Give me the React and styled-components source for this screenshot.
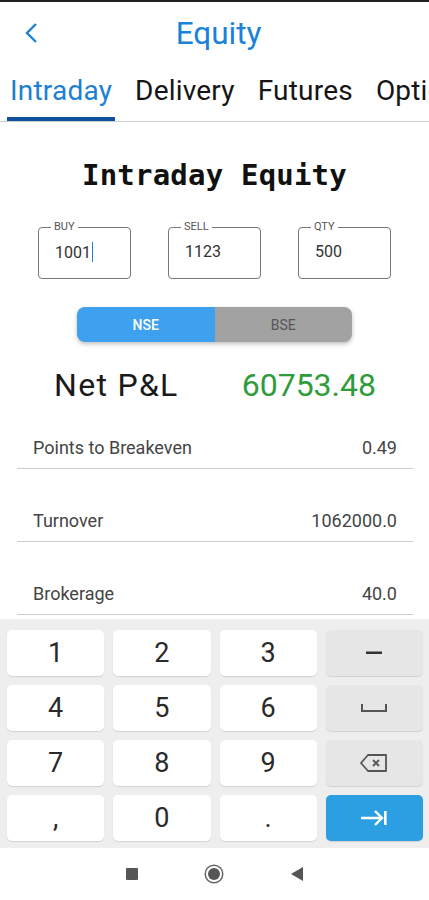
import styled, { createGlobalStyle } from 'styled-components';

const Global = createGlobalStyle`
  html, body { margin: 0; padding: 0; background: #fff; }
  body { font-family: Roboto, "Noto Sans", sans-serif; }
`;

const Screen = styled.div`
  width: 429px;
  height: 900px;
  display: flex;
  flex-direction: column;
  overflow: hidden;
  border-top: 2px solid #222;
  box-sizing: border-box;
`;

const Header = styled.div`
  height: 62px;
  display: flex;
  align-items: center;
  justify-content: center;
  position: relative;
`;

const Back = styled.div`
  position: absolute;
  left: 22px;
  top: 18px;
  width: 20px;
  height: 26px;
`;

const Title = styled.div`
  font-size: 31.5px;
  color: #1a82d8;
  margin-left: 8px;
`;

const Tabs = styled.div`
  display: flex;
  white-space: nowrap;
  overflow: hidden;
  border-bottom: 1.5px solid #cfcfcf;
  padding-left: 7px;
  gap: 17px;
  height: 58px;
  box-sizing: border-box;
  align-items: flex-end;
`;

const Tab = styled.div`
  font-size: 28px;
  line-height: 32px;
  padding: 0 3px 10px;
  color: ${p => (p.active ? '#1e7fd0' : '#151515')};
  border-bottom: 4px solid ${p => (p.active ? '#0e4f9e' : 'transparent')};
  letter-spacing: 0.2px;
`;

const Heading = styled.div`
  font-family: "DejaVu Sans Mono", monospace;
  font-weight: bold;
  font-size: 29px;
  color: #111;
  text-align: center;
  margin-top: 36px;
  letter-spacing: 0.2px;
`;

const Inputs = styled.div`
  display: flex;
  justify-content: space-between;
  padding: 0 38px;
  margin-top: 35px;
`;

const Field = styled.div`
  position: relative;
  width: 93px;
  height: 52px;
  border: 1.3px solid #777;
  border-radius: 4px;
  box-sizing: border-box;
`;

const Label = styled.span`
  position: absolute;
  top: -7px;
  left: 12px;
  padding: 0 3px;
  background: #fff;
  font-size: 11px;
  color: #555;
  line-height: 12px;
`;

const Value = styled.div`
  position: absolute;
  left: 16px;
  top: 14px;
  font-size: 16px;
  color: #333;
  display: flex;
  align-items: center;
`;

const Caret = styled.span`
  width: 1.5px;
  height: 20px;
  background: #1a82d8;
  margin-left: 1px;
`;

const Toggle = styled.div`
  margin: 28px auto 0;
  width: 275px;
  height: 35px;
  border-radius: 8px;
  background: #a2a2a2;
  display: flex;
  overflow: hidden;
  box-shadow: 0 2px 4px rgba(0, 0, 0, 0.25);
`;

const Option = styled.div`
  flex: 1;
  display: flex;
  align-items: center;
  justify-content: center;
  font-size: 14px;
  font-weight: ${p => (p.active ? 500 : 400)};
  color: ${p => (p.active ? '#fff' : '#555')};
  background: ${p => (p.active ? '#3da1f0' : 'transparent')};
  border-radius: ${p => (p.active ? '8px 0 0 8px' : '0')};
`;

const NetRow = styled.div`
  display: flex;
  align-items: center;
  padding: 0 53px 0 54px;
  justify-content: space-between;
  margin-top: 23px;
  font-size: 32px;
  line-height: 40px;
`;

const NetLabel = styled.span`
  color: #1a1a1a;
  letter-spacing: 1.3px;
`;

const NetValue = styled.span`
  color: #2e9c3a;
`;

const Rows = styled.div`
  margin-top: 22px;
`;

const Row = styled.div`
  display: flex;
  justify-content: space-between;
  align-items: center;
  margin: 0 16px 0 17px;
  padding: 0 16px;
  height: 41px;
  margin-top: ${p => (p.first ? '0' : '31px')};
  border-bottom: 1.5px solid #cdcdcd;
  font-size: 18px;
  color: #444;
`;

const Spacer = styled.div`
  flex: 1;
`;

const Keyboard = styled.div`
  background: #eeeeee;
  padding: 11px 6px 7px 7px;
  display: grid;
  grid-template-columns: repeat(4, 1fr);
  grid-auto-rows: 46px;
  column-gap: 9px;
  row-gap: 9px;
`;

const Key = styled.div`
  background: ${p => (p.kind === 'fn' ? '#e6e6e6' : p.kind === 'go' ? '#2c9fe2' : '#fff')};
  border-radius: 5px;
  box-shadow: 0 1px 1px rgba(0, 0, 0, 0.12);
  display: flex;
  align-items: center;
  justify-content: center;
  font-size: 27px;
  color: #2a2a2a;
`;

const NavBar = styled.div`
  height: 52px;
  background: #fff;
  display: flex;
  align-items: center;
  justify-content: center;
  gap: 70px;
`;

const Square = styled.div`
  width: 12px;
  height: 12px;
  background: #555;
  border-radius: 1px;
`;

const Home = styled.div`
  width: 12px;
  height: 12px;
  border-radius: 50%;
  background: #555;
  box-shadow: 0 0 0 2px #fff, 0 0 0 3.5px #666;
`;

function Chevron() {
  return (
    <svg width="20" height="26" viewBox="0 0 20 26">
      <path d="M14 4 L5 13 L14 22" fill="none" stroke="#1a82d8" strokeWidth="2.4" />
    </svg>
  );
}

function Triangle() {
  return (
    <svg width="14" height="16" viewBox="0 0 14 16">
      <path d="M13 1 L1 8 L13 15 Z" fill="#555" />
    </svg>
  );
}

function Dash() {
  return (
    <svg width="16" height="4" viewBox="0 0 16 4">
      <rect x="0" y="0.5" width="16" height="2.5" fill="#333" />
    </svg>
  );
}

function SpaceIcon() {
  return (
    <svg width="26" height="10" viewBox="0 0 26 10">
      <path d="M1 1 V8 H25 V1" fill="none" stroke="#555" strokeWidth="2" />
    </svg>
  );
}

function BackspaceIcon() {
  return (
    <svg width="28" height="20" viewBox="0 0 28 20">
      <path d="M8 2 H26 V18 H8 L1 10 Z" fill="none" stroke="#555" strokeWidth="1.8" strokeLinejoin="round" />
      <path d="M13 7 L19 13 M19 7 L13 13" stroke="#555" strokeWidth="1.8" />
    </svg>
  );
}

function TabIcon() {
  return (
    <svg width="28" height="18" viewBox="0 0 28 18">
      <path d="M1 9 H22 M15 2 L22 9 L15 16" fill="none" stroke="#fff" strokeWidth="2.4" />
      <rect x="24" y="2" width="2.6" height="14" fill="#fff" />
    </svg>
  );
}

const rows = [
  ['Points to Breakeven', '0.49'],
  ['Turnover', '1062000.0'],
  ['Brokerage', '40.0'],
];

export default function App() {
  return (
    <>
      <Global />
      <Screen>
        <Header>
          <Back><Chevron /></Back>
          <Title>Equity</Title>
        </Header>
        <Tabs>
          <Tab active>Intraday</Tab>
          <Tab>Delivery</Tab>
          <Tab>Futures</Tab>
          <Tab>Options</Tab>
        </Tabs>
        <Heading>Intraday Equity</Heading>
        <Inputs>
          <Field>
            <Label>BUY</Label>
            <Value>1001<Caret /></Value>
          </Field>
          <Field>
            <Label>SELL</Label>
            <Value>1123</Value>
          </Field>
          <Field>
            <Label>QTY</Label>
            <Value>500</Value>
          </Field>
        </Inputs>
        <Toggle>
          <Option active>NSE</Option>
          <Option>BSE</Option>
        </Toggle>
        <NetRow>
          <NetLabel>Net P&amp;L</NetLabel>
          <NetValue>60753.48</NetValue>
        </NetRow>
        <Rows>
          {rows.map(([k, v], i) => (
            <Row key={k} first={i === 0}>
              <span>{k}</span>
              <span>{v}</span>
            </Row>
          ))}
        </Rows>
        <Spacer />
        <Keyboard>
          <Key>1</Key>
          <Key>2</Key>
          <Key>3</Key>
          <Key kind="fn"><Dash /></Key>
          <Key>4</Key>
          <Key>5</Key>
          <Key>6</Key>
          <Key kind="fn"><SpaceIcon /></Key>
          <Key>7</Key>
          <Key>8</Key>
          <Key>9</Key>
          <Key kind="fn"><BackspaceIcon /></Key>
          <Key>,</Key>
          <Key>0</Key>
          <Key>.</Key>
          <Key kind="go"><TabIcon /></Key>
        </Keyboard>
        <NavBar>
          <Square />
          <Home />
          <Triangle />
        </NavBar>
      </Screen>
    </>
  );
}
